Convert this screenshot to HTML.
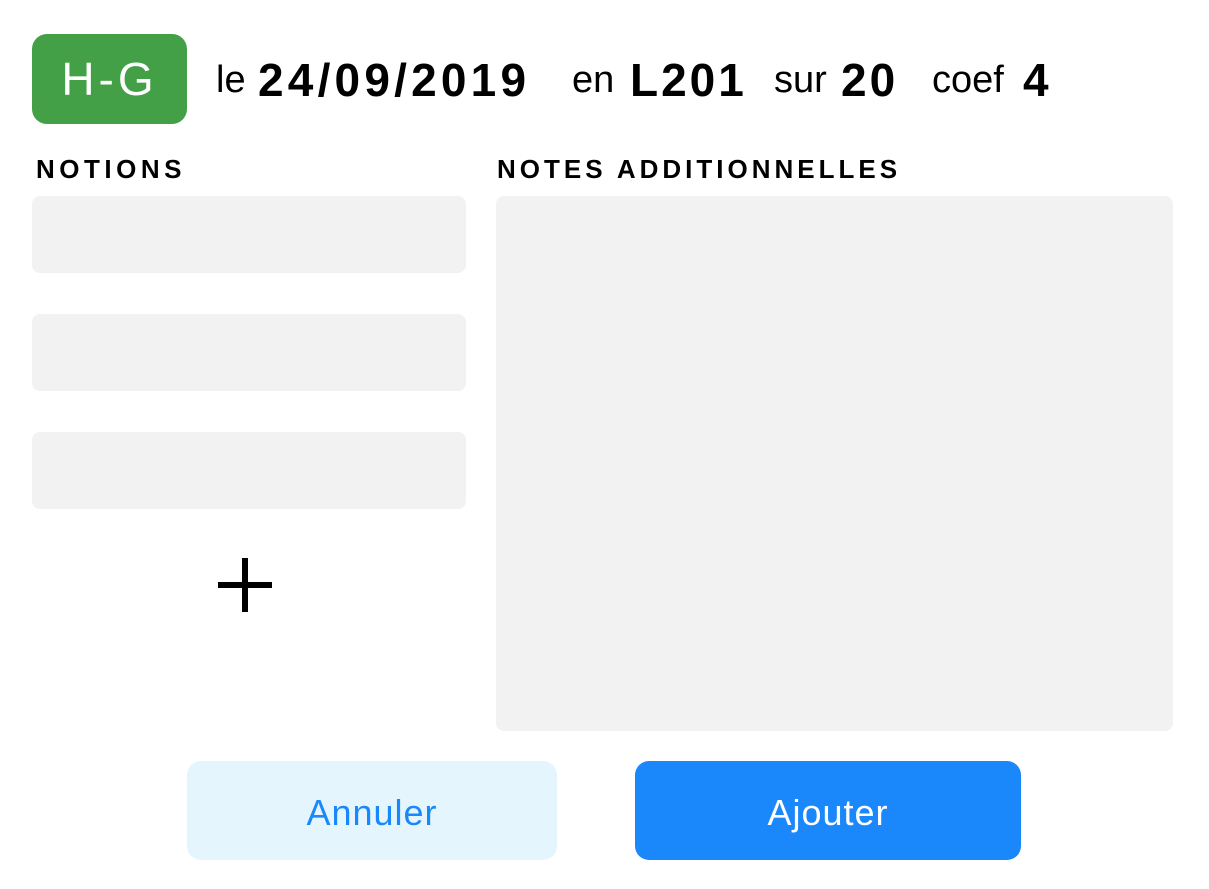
<!DOCTYPE html>
<html><head><style>
body{margin:0;width:1209px;height:889px;background:#fff;font-family:"Liberation Sans",sans-serif;position:relative;overflow:hidden}
.a{position:absolute;white-space:nowrap}
.badge{left:32px;top:34px;width:155px;height:90px;background:#43a047;border-radius:15px;color:#fff;font-size:46px;line-height:90px;text-align:center;letter-spacing:4px}
.t{top:50px;font-size:38px;line-height:60px;color:#000}
.b{top:50px;font-size:46px;line-height:60px;font-weight:bold;color:#000;letter-spacing:3px}
.lbl{font-size:26px;font-weight:bold;top:154px}
.in{background:#f2f2f2;border-radius:8px}
.btn{border-radius:14px;font-size:36px;text-align:center;line-height:104px}
</style></head><body>
<div class="a badge">H-G</div>
<div class="a t" style="left:216px">le</div>
<div class="a b" style="left:258px;letter-spacing:4.2px">24/09/2019</div>
<div class="a t" style="left:572px">en</div>
<div class="a b" style="left:630px">L201</div>
<div class="a t" style="left:774px">sur</div>
<div class="a b" style="left:841px">20</div>
<div class="a t" style="left:932px">coef</div>
<div class="a b" style="left:1023px">4</div>
<div class="a lbl" style="left:36px;letter-spacing:4.5px">NOTIONS</div>
<div class="a lbl" style="left:497px;letter-spacing:4px">NOTES ADDITIONNELLES</div>
<div class="a in" style="left:32px;top:196px;width:434px;height:77px"></div>
<div class="a in" style="left:32px;top:314px;width:434px;height:77px"></div>
<div class="a in" style="left:32px;top:432px;width:434px;height:77px"></div>
<div class="a in" style="left:496px;top:196px;width:677px;height:535px"></div>
<div class="a" style="left:218px;top:582px;width:54px;height:6px;background:#000"></div>
<div class="a" style="left:242px;top:558px;width:6px;height:54px;background:#000"></div>
<div class="a btn" style="left:187px;top:761px;width:370px;height:99px;background:#e4f5fd;color:#1a88fb;letter-spacing:1px">Annuler</div>
<div class="a btn" style="left:635px;top:761px;width:386px;height:99px;background:#1a88fb;color:#fff;letter-spacing:1px">Ajouter</div>
</body></html>
